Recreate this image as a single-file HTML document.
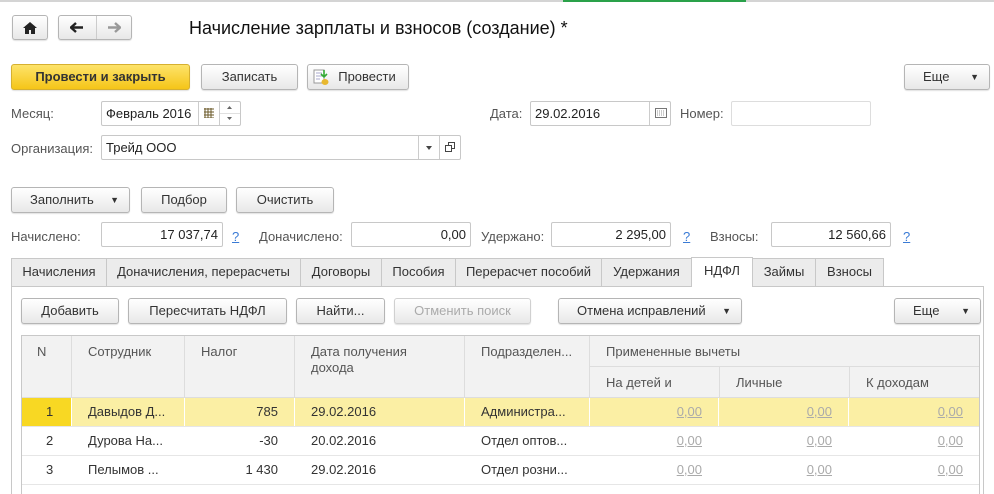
<!DOCTYPE html>
<html><head><meta charset="utf-8"><style>
*{box-sizing:border-box;margin:0;padding:0}
html,body{width:994px;height:494px;overflow:hidden}
body{background:#fff;font-family:"Liberation Sans",Arial,sans-serif;font-size:13px;color:#333;position:relative}
.a{position:absolute}
.btn{position:absolute;border:1px solid #b5b5b5;border-radius:3px;background:linear-gradient(#fff,#e8e8e8);text-align:center;color:#333;box-shadow:0 1px 1px rgba(0,0,0,.12)}
.inp{position:absolute;border:1px solid #c8c8c8;border-radius:2px;background:#fff;height:25px;line-height:23px;padding:0 4px;color:#222}
.lbl{position:absolute;color:#555}
.tab{position:absolute;top:258px;height:28px;border:1px solid #c8c8c8;border-bottom:none;background:#ececec;line-height:26px;text-align:center;color:#333}
.th{position:absolute;background:#f2f2f2;border-right:1px solid #ddd;border-bottom:1px solid #ddd;color:#555;padding:8px 0 0 16px}
.c{position:absolute;height:28px;line-height:28px;color:#333;white-space:nowrap}
.z{color:#aaa;text-decoration:underline;text-align:right}
.q{position:absolute;color:#3a7bd5;text-decoration:underline}
</style></head><body>
<div class="a" style="left:0;top:0;width:994px;height:2px;background:#d4d4d4"></div>
<div class="a" style="left:563px;top:0;width:183px;height:2px;background:#2aa14a"></div>

<div class="btn" style="left:12px;top:15px;width:36px;height:25px"><svg width="14" height="12" viewBox="0 0 14 12" style="margin-top:6px"><path d="M7 0L0 6h2v6h4V8h2v4h4V6h2z" fill="#222"/></svg></div>
<div class="btn" style="left:58px;top:15px;width:74px;height:25px"><div class="a" style="left:37px;top:0;width:1px;height:23px;background:#ccc"></div>
<svg class="a" style="left:11px;top:6px" width="14" height="11" viewBox="0 0 14 11"><path d="M1 5.5h12M6 1L1 5.5 6 10" stroke="#222" stroke-width="2.4" fill="none"/></svg>
<svg class="a" style="left:48px;top:6px" width="14" height="11" viewBox="0 0 14 11"><path d="M1 5.5h12M8 1l5 4.5L8 10" stroke="#999" stroke-width="2.4" fill="none"/></svg></div>
<div class="a" style="left:189px;top:18px;font-size:18px;color:#111">Начисление зарплаты и взносов (создание) *</div>

<div class="btn" style="left:11px;top:64px;width:179px;height:26px;line-height:24px;background:linear-gradient(#fde36a,#f5c518);border-color:#d6b030;font-weight:bold;color:#333">Провести и закрыть</div>
<div class="btn" style="left:201px;top:64px;width:97px;height:26px;line-height:24px">Записать</div>
<div class="btn" style="left:307px;top:64px;width:102px;height:26px;line-height:24px;padding-left:18px"><svg class="a" style="left:5px;top:4px" width="16" height="17" viewBox="0 0 16 17"><rect x="1" y="1" width="10" height="13" fill="#fff" stroke="#999"/><path d="M3 4h6M3 7h6M3 10h4" stroke="#aac"/><path d="M11 1v6M8 5l3 3 3-3" stroke="#3a3" stroke-width="1.6" fill="none"/><ellipse cx="12" cy="13" rx="3.5" ry="3" fill="#e8b830"/></svg>Провести</div>
<div class="btn" style="left:904px;top:64px;width:86px;height:26px;line-height:24px;text-align:left;padding-left:18px">Еще<span class="a" style="right:10px;top:0;font-size:9px">▼</span></div>

<div class="lbl" style="left:11px;top:106px">Месяц:</div>
<div class="inp" style="left:101px;top:101px;width:140px">Февраль 2016</div>
<div class="a" style="left:198px;top:102px;width:1px;height:23px;background:#ccc"></div>
<div class="a" style="left:219px;top:102px;width:1px;height:23px;background:#ccc"></div>
<div class="a" style="left:220px;top:113px;width:20px;height:1px;background:#e0e0e0"></div>
<svg class="a" style="left:204px;top:108px" width="10" height="10"><path d="M0 1h10M0 4h10M0 7h10M0 10h10M1 0v10M4 0v10M7 0v10" stroke="#6b5a2a"/></svg>
<svg class="a" style="left:227px;top:106px" width="5" height="14"><path d="M0 3L2.5 0 5 3zM0 11l2.5 3 2.5-3z" fill="#666"/></svg>
<div class="lbl" style="left:490px;top:106px">Дата:</div>
<div class="inp" style="left:530px;top:101px;width:141px">29.02.2016</div>
<div class="a" style="left:649px;top:102px;width:1px;height:23px;background:#ccc"></div>
<svg class="a" style="left:655px;top:108px" width="12" height="10"><rect x=".5" y=".5" width="11" height="9" fill="none" stroke="#777"/><path d="M2 3h8M2 5h8M2 7h8" stroke="#999" stroke-dasharray="1 1"/></svg>
<div class="lbl" style="left:680px;top:106px">Номер:</div>
<div class="inp" style="left:731px;top:101px;width:140px;border-color:#ddd"></div>

<div class="lbl" style="left:11px;top:141px">Организация:</div>
<div class="inp" style="left:101px;top:135px;width:360px">Трейд ООО</div>
<div class="a" style="left:418px;top:136px;width:1px;height:23px;background:#ccc"></div>
<div class="a" style="left:439px;top:136px;width:1px;height:23px;background:#ccc"></div>
<svg class="a" style="left:426px;top:146px" width="6" height="4"><path d="M0 0h6L3 4z" fill="#444"/></svg>
<svg class="a" style="left:445px;top:142px" width="10" height="10"><rect x="3.5" y=".5" width="6" height="6" fill="none" stroke="#444"/><rect x=".5" y="3.5" width="6" height="6" fill="#fff" stroke="#444"/></svg>

<div class="btn" style="left:11px;top:187px;width:119px;height:26px;line-height:24px;text-align:left;padding-left:18px">Заполнить<span class="a" style="right:10px;top:0;font-size:9px">▼</span></div>
<div class="btn" style="left:141px;top:187px;width:86px;height:26px;line-height:24px">Подбор</div>
<div class="btn" style="left:236px;top:187px;width:98px;height:26px;line-height:24px">Очистить</div>

<div class="lbl" style="left:11px;top:229px">Начислено:</div>
<div class="inp" style="left:101px;top:222px;width:122px;text-align:right">17 037,74</div>
<div class="q" style="left:232px;top:229px">?</div>
<div class="lbl" style="left:259px;top:229px">Доначислено:</div>
<div class="inp" style="left:351px;top:222px;width:120px;text-align:right">0,00</div>
<div class="lbl" style="left:481px;top:229px">Удержано:</div>
<div class="inp" style="left:551px;top:222px;width:120px;text-align:right">2 295,00</div>
<div class="q" style="left:683px;top:229px">?</div>
<div class="lbl" style="left:710px;top:229px">Взносы:</div>
<div class="inp" style="left:771px;top:222px;width:120px;text-align:right">12 560,66</div>
<div class="q" style="left:903px;top:229px">?</div>

<div class="a" style="left:11px;top:286px;width:973px;height:220px;border:1px solid #c8c8c8"></div>
<div class="tab" style="left:11px;width:96px">Начисления</div>
<div class="tab" style="left:106px;width:195px">Доначисления, перерасчеты</div>
<div class="tab" style="left:300px;width:82px">Договоры</div>
<div class="tab" style="left:381px;width:75px">Пособия</div>
<div class="tab" style="left:455px;width:147px">Перерасчет пособий</div>
<div class="tab" style="left:601px;width:91px">Удержания</div>
<div class="tab" style="left:691px;width:62px;top:257px;height:30px;background:#fff">НДФЛ</div>
<div class="tab" style="left:752px;width:64px">Займы</div>
<div class="tab" style="left:815px;width:69px">Взносы</div>

<div class="btn" style="left:21px;top:298px;width:98px;height:26px;line-height:24px">Добавить</div>
<div class="btn" style="left:128px;top:298px;width:159px;height:26px;line-height:24px">Пересчитать НДФЛ</div>
<div class="btn" style="left:296px;top:298px;width:89px;height:26px;line-height:24px">Найти...</div>
<div class="btn" style="left:394px;top:298px;width:137px;height:26px;line-height:24px;color:#aaa;border-color:#d0d0d0">Отменить поиск</div>
<div class="btn" style="left:558px;top:298px;width:184px;height:26px;line-height:24px;text-align:left;padding-left:18px">Отмена исправлений<span class="a" style="right:10px;top:0;font-size:9px">▼</span></div>
<div class="btn" style="left:894px;top:298px;width:87px;height:26px;line-height:24px;text-align:left;padding-left:18px">Еще<span class="a" style="right:10px;top:0;font-size:9px">▼</span></div>

<div class="a" style="left:21px;top:335px;width:959px;height:170px;border:1px solid #c8c8c8;border-bottom:none"></div>
<div class="th" style="left:22px;top:336px;width:50px;height:62px;padding-left:15px">N</div>
<div class="th" style="left:72px;top:336px;width:113px;height:62px">Сотрудник</div>
<div class="th" style="left:185px;top:336px;width:110px;height:62px">Налог</div>
<div class="th" style="left:295px;top:336px;width:170px;height:62px;line-height:16px">Дата получения<br>дохода</div>
<div class="th" style="left:465px;top:336px;width:125px;height:62px">Подразделен...</div>
<div class="th" style="left:590px;top:336px;width:389px;height:31px;border-right:none">Примененные вычеты</div>
<div class="th" style="left:590px;top:367px;width:130px;height:31px">На детей и</div>
<div class="th" style="left:720px;top:367px;width:130px;height:31px">Личные</div>
<div class="th" style="left:850px;top:367px;width:129px;height:31px;border-right:none">К доходам</div>

<div class="a" style="left:22px;top:398px;width:957px;height:28px;background:#fbefa4"></div>
<div class="a" style="left:22px;top:398px;width:49px;height:28px;background:#f8d823"></div>
<div class="a" style="left:71px;top:398px;width:1px;height:28px;background:#fff"></div>
<div class="a" style="left:184px;top:398px;width:1px;height:28px;background:#fff"></div>
<div class="a" style="left:294px;top:398px;width:1px;height:28px;background:#fff"></div>
<div class="a" style="left:464px;top:398px;width:1px;height:28px;background:#fff"></div>
<div class="a" style="left:589px;top:398px;width:1px;height:28px;background:#fff"></div>
<div class="a" style="left:718px;top:398px;width:1px;height:28px;background:#fff"></div>
<div class="a" style="left:848px;top:398px;width:1px;height:28px;background:#fff"></div>
<div class="a" style="left:22px;top:426px;width:957px;height:1px;background:#e6e6e6"></div>
<div class="a" style="left:22px;top:455px;width:957px;height:1px;background:#e6e6e6"></div>
<div class="a" style="left:22px;top:484px;width:957px;height:1px;background:#e6e6e6"></div>

<div class="c" style="left:46px;top:398px">1</div><div class="c" style="left:88px;top:398px">Давыдов Д...</div><div class="c" style="left:184px;top:398px;width:94px;text-align:right">785</div><div class="c" style="left:311px;top:398px">29.02.2016</div><div class="c" style="left:481px;top:398px">Администра...</div>
<div class="c" style="left:46px;top:427px">2</div><div class="c" style="left:88px;top:427px">Дурова На...</div><div class="c" style="left:184px;top:427px;width:94px;text-align:right">-30</div><div class="c" style="left:311px;top:427px">20.02.2016</div><div class="c" style="left:481px;top:427px">Отдел оптов...</div>
<div class="c" style="left:46px;top:456px">3</div><div class="c" style="left:88px;top:456px">Пелымов ...</div><div class="c" style="left:184px;top:456px;width:94px;text-align:right">1 430</div><div class="c" style="left:311px;top:456px">29.02.2016</div><div class="c" style="left:481px;top:456px">Отдел розни...</div>

<div class="c z" style="left:600px;top:398px;width:102px">0,00</div><div class="c z" style="left:730px;top:398px;width:102px">0,00</div><div class="c z" style="left:860px;top:398px;width:103px">0,00</div>
<div class="c z" style="left:600px;top:427px;width:102px">0,00</div><div class="c z" style="left:730px;top:427px;width:102px">0,00</div><div class="c z" style="left:860px;top:427px;width:103px">0,00</div>
<div class="c z" style="left:600px;top:456px;width:102px">0,00</div><div class="c z" style="left:730px;top:456px;width:102px">0,00</div><div class="c z" style="left:860px;top:456px;width:103px">0,00</div>
</body></html>
